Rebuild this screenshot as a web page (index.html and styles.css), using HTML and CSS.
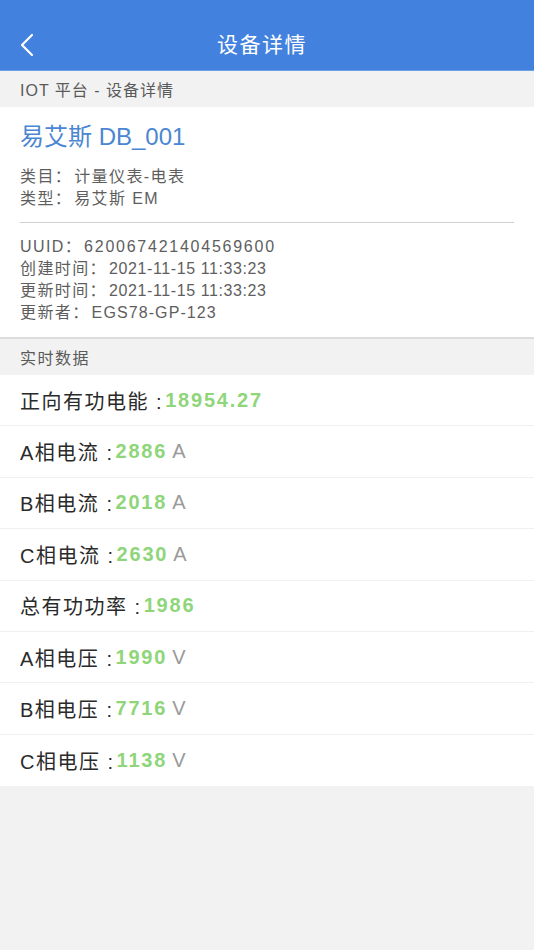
FILE: index.html
```html
<!DOCTYPE html>
<html lang="zh-CN">
<head>
<meta charset="utf-8">
<title>设备详情</title>
<link rel="stylesheet" href="styles.css">
</head>
<body>
<header class="nav">
  <span class="back"><svg width="16" height="24" viewBox="0 0 16 24"><path d="M13 2 L3 12 L13 22" fill="none" stroke="#fff" stroke-width="2.2" stroke-linecap="round" stroke-linejoin="round"/></svg></span>
  <h1 class="nav-title">设备详情</h1>
</header>
<div class="crumb">IOT 平台 - 设备详情</div>
<section class="detail">
  <div class="dev-name">易艾斯 DB_001</div>
  <div class="info">
    <div>类目：<span class="v">计量仪表-电表</span></div>
    <div>类型：<span class="v">易艾斯 EM</span></div>
  </div>
  <div class="divider"></div>
  <div class="info">
    <div>UUID：<span class="v v-id">620067421404569600</span></div>
    <div>创建时间：<span class="v v-date">2021-11-15 11:33:23</span></div>
    <div>更新时间：<span class="v v-date">2021-11-15 11:33:23</span></div>
    <div>更新者：<span class="v v-code">EGS78-GP-123</span></div>
  </div>
</section>
<div class="sec-head">实时数据</div>
<ul class="rows">
  <li class="row">正向有功电能 :<b class="val">18954.27</b></li>
  <li class="row">A相电流 :<b class="val">2886</b><span class="unit">A</span></li>
  <li class="row">B相电流 :<b class="val">2018</b><span class="unit">A</span></li>
  <li class="row">C相电流 :<b class="val">2630</b><span class="unit">A</span></li>
  <li class="row">总有功功率 :<b class="val">1986</b></li>
  <li class="row">A相电压 :<b class="val">1990</b><span class="unit">V</span></li>
  <li class="row">B相电压 :<b class="val">7716</b><span class="unit">V</span></li>
  <li class="row">C相电压 :<b class="val">1138</b><span class="unit">V</span></li>
</ul>
</body>
</html>
```
FILE: styles.css
```css
* { box-sizing: border-box; }
html, body { margin: 0; padding: 0; }
body {
  background: #f2f2f2;
  font-family: "Liberation Sans", "Noto Sans CJK SC", sans-serif;
  width: 534px;
  min-height: 950px;
}
.nav {
  height: 71px;
  background: #4381de;
  display: flex;
  align-items: center;
  justify-content: center;
  position: relative;
  border-bottom: 1px solid #6d9fe6;
}
.back {
  position: absolute;
  left: 19px;
  top: 33px;
  display: flex;
}
.nav-title {
  margin: 15px 10px 0 0;
  font-weight: normal;
  font-size: 21px;
  letter-spacing: 1.5px;
  color: #fff;
}
.crumb {
  height: 36px;
  display: flex;
  align-items: center;
  padding-left: 20px;
  font-size: 16px;
  color: #5a5a5a;
  background: #f2f2f2;
  letter-spacing: 1px;
}
.detail {
  background: #fff;
  padding: 13px 20px 13px 20px;
  border-bottom: 2px solid #dcdcdc;
}
.dev-name {
  font-size: 24px;
  line-height: 34px;
  color: #4a86d2;
  margin-bottom: 12px;
}
.info {
  font-size: 16px;
  line-height: 22px;
  color: #5e5e5e;
  letter-spacing: 1.4px;
}
.v { margin-left: 2px; }
.v-id { letter-spacing: 1.75px; }
.v-date { letter-spacing: 0.6px; }
.v-code { letter-spacing: 1.1px; }
.divider {
  height: 1px;
  background: #d0d0d0;
  margin: 12px 0 13px 0;
}
.sec-head {
  height: 36px;
  display: flex;
  align-items: center;
  padding-left: 20px;
  font-size: 16px;
  letter-spacing: 1.5px;
  color: #5a5a5a;
}
.rows {
  list-style: none;
  margin: 0;
  padding: 0;
  background: #fff;
}
.row {
  height: 51.4px;
  display: flex;
  align-items: center;
  padding-left: 20px;
  font-size: 20px;
  letter-spacing: 1.5px;
  color: #2a2a2a;
  border-bottom: 1px solid #f0f0f0;
  white-space: pre;
}
.row:last-child { border-bottom: none; height: 51px; }
.val {
  color: #8fd57a;
  font-weight: bold;
  letter-spacing: 1.8px;
  margin-left: 2px;
}
.unit {
  color: #9a9a9a;
  margin-left: 5px;
}
```
